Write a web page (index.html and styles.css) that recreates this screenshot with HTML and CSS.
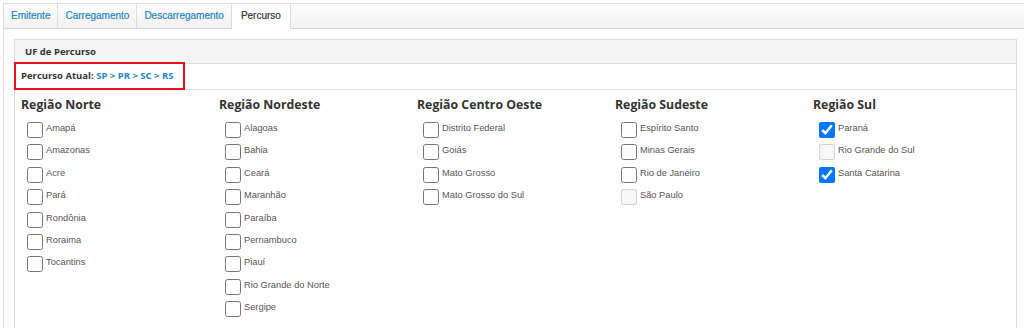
FILE: index.html
```html
<!DOCTYPE html>
<html lang="pt-BR">
<head>
    <meta charset="UTF-8">
    <title>UF de Percurso</title>
    <link rel="stylesheet" href="styles.css">
</head>
<body>
    <div class="abas">
        <ul class="abas-lista">
            <li><a href="#">Emitente</a></li>
            <li><a href="#">Carregamento</a></li>
            <li><a href="#">Descarregamento</a></li>
            <li class="ativa"><a href="#">Percurso</a></li>
        </ul>

        <div class="aba-conteudo">
            <div class="painel">
                <div class="painel-titulo">UF de Percurso</div>

                <div class="percurso-linha">
                    <span class="percurso-atual">Percurso Atual:&nbsp;<span class="rota">SP &gt; PR &gt; SC &gt; RS</span></span>
                </div>

                <div class="regioes">
                    <div class="regiao">
                        <h4>Região Norte</h4>
                        <label class="uf"><input type="checkbox"> <span>Amapá</span></label>
                        <label class="uf"><input type="checkbox"> <span>Amazonas</span></label>
                        <label class="uf"><input type="checkbox"> <span>Acre</span></label>
                        <label class="uf"><input type="checkbox"> <span>Pará</span></label>
                        <label class="uf"><input type="checkbox"> <span>Rondônia</span></label>
                        <label class="uf"><input type="checkbox"> <span>Roraima</span></label>
                        <label class="uf"><input type="checkbox"> <span>Tocantins</span></label>
                    </div>

                    <div class="regiao">
                        <h4>Região Nordeste</h4>
                        <label class="uf"><input type="checkbox"> <span>Alagoas</span></label>
                        <label class="uf"><input type="checkbox"> <span>Bahia</span></label>
                        <label class="uf"><input type="checkbox"> <span>Ceará</span></label>
                        <label class="uf"><input type="checkbox"> <span>Maranhão</span></label>
                        <label class="uf"><input type="checkbox"> <span>Paraíba</span></label>
                        <label class="uf"><input type="checkbox"> <span>Pernambuco</span></label>
                        <label class="uf"><input type="checkbox"> <span>Piauí</span></label>
                        <label class="uf"><input type="checkbox"> <span>Rio Grande do Norte</span></label>
                        <label class="uf"><input type="checkbox"> <span>Sergipe</span></label>
                    </div>

                    <div class="regiao">
                        <h4>Região Centro Oeste</h4>
                        <label class="uf"><input type="checkbox"> <span>Distrito Federal</span></label>
                        <label class="uf"><input type="checkbox"> <span>Goiás</span></label>
                        <label class="uf"><input type="checkbox"> <span>Mato Grosso</span></label>
                        <label class="uf"><input type="checkbox"> <span>Mato Grosso do Sul</span></label>
                    </div>

                    <div class="regiao">
                        <h4>Região Sudeste</h4>
                        <label class="uf"><input type="checkbox"> <span>Espírito Santo</span></label>
                        <label class="uf"><input type="checkbox"> <span>Minas Gerais</span></label>
                        <label class="uf"><input type="checkbox"> <span>Rio de Janeiro</span></label>
                        <label class="uf"><input type="checkbox" disabled> <span>São Paulo</span></label>
                    </div>

                    <div class="regiao">
                        <h4>Região Sul</h4>
                        <label class="uf"><input type="checkbox" checked> <span>Paraná</span></label>
                        <label class="uf"><input type="checkbox" disabled> <span>Rio Grande do Sul</span></label>
                        <label class="uf"><input type="checkbox" checked> <span>Santa Catarina</span></label>
                    </div>
                </div>
            </div>
        </div>
    </div>
</body>
</html>
```

FILE: styles.css
```css
body {
    margin: 0;
    padding: 3px 0 0 3px;
    overflow: hidden;
    font-family: "Open Sans", Arial, sans-serif;
    color: #333;
    background: #fff;
}

.abas {
    width: 1040px;
}

.abas-lista {
    display: flex;
    margin: 0;
    padding: 0;
    list-style: none;
    border: 1px solid #ddd;
    border-bottom-color: #d6d6d6;
    background: linear-gradient(#fdfdfd, #f2f2f2);
    height: 24px;
}

.abas-lista li {
    border-right: 1px solid #ddd;
}

.abas-lista a {
    display: block;
    padding: 0 7px;
    line-height: 24px;
    font-family: "Liberation Sans", Arial, sans-serif;
    font-size: 10px;
    color: #2584c4;
    text-decoration: none;
    -webkit-text-stroke: 0.2px currentColor;
}

.abas-lista li.ativa {
    background: #fff;
    height: 25px;
}

.abas-lista li.ativa a {
    color: #333;
    padding: 0 9px;
}

.aba-conteudo {
    border-left: 1px solid #ddd;
    padding: 10px 0 0 10px;
}

.painel {
    width: 1001px;
    border: 1px solid #ddd;
    border-bottom: 0;
    height: 300px;
}

.painel-titulo {
    height: 23px;
    line-height: 23px;
    padding-left: 10px;
    font-size: 9.5px;
    font-weight: 700;
    background: #f5f5f5;
    border-bottom: 1px solid #ddd;
}

.percurso-linha {
    display: flex;
    height: 25px;
    border-bottom: 1px solid #ddd;
}

.percurso-atual {
    display: block;
    margin: -2px 0 0 -1px;
    height: 24px;
    line-height: 24px;
    padding: 0 10px 0 5px;
    border: 2px solid #e3141b;
    font-size: 9.5px;
    font-weight: 700;
}

.rota {
    color: #2584c4;
}

.regioes {
    display: grid;
    grid-template-columns: repeat(5, 198px);
    padding: 6px 0 0 6px;
}

.regiao h4 {
    margin: 0 0 8px;
    font-size: 12.3px;
    font-weight: 700;
    line-height: 18px;
    color: #333;
}

.uf {
    display: flex;
    align-items: flex-start;
    height: 22.4px;
    padding-left: 6px;
    font-family: "Liberation Sans", Arial, sans-serif;
    font-size: 9.3px;
    color: #555;
}

.uf input {
    width: 16px;
    height: 16px;
    margin: 0 3px 0 0;
}

.uf span {
    line-height: 13px;
}
```
